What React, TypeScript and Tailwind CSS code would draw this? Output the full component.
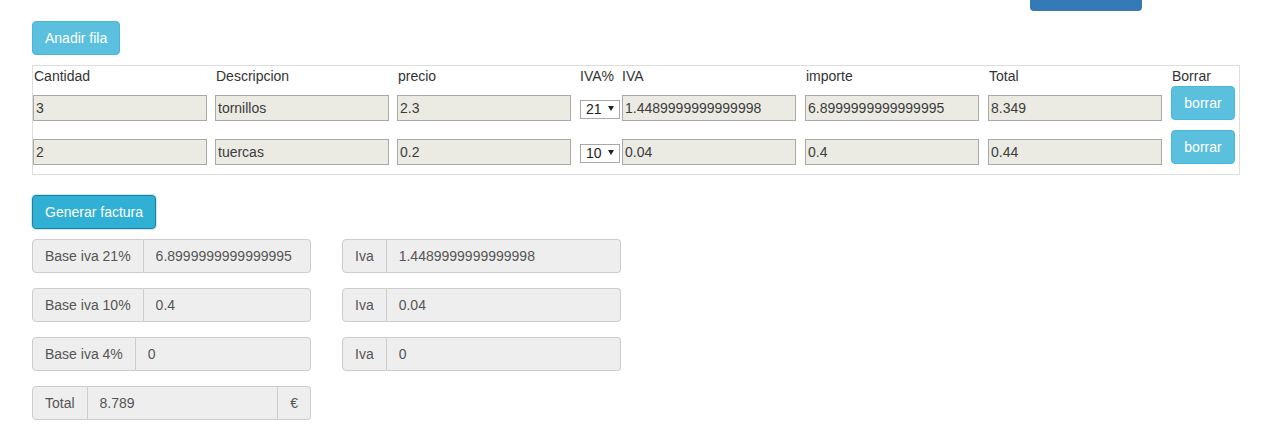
import React from "react";

type Line = { cantidad: string; desc: string; precio: string; iva: string; ivaVal: string; importe: string; total: string };

const lines: Line[] = [
  { cantidad: "3", desc: "tornillos", precio: "2.3", iva: "21", ivaVal: "1.4489999999999998", importe: "6.8999999999999995", total: "8.349" },
  { cantidad: "2", desc: "tuercas", precio: "0.2", iva: "10", ivaVal: "0.04", importe: "0.4", total: "0.44" },
];

const cols = "grid grid-cols-[182px_182px_183px_42px_183px_183px_183px_68px]";

function Cell({ value }: { value: string }) {
  return (
    <input
      readOnly
      value={value}
      className="mt-[9px] h-[26px] w-[174px] border border-[#a9a9a9] bg-[#ebebe4] px-[2px] text-[14px] text-[#3c3c3c] outline-none"
    />
  );
}

function Group({ label, value, width, suffix }: { label: string; value: string; width: string; suffix?: string }) {
  return (
    <div className={`flex h-[34px] ${width}`}>
      <span className="flex items-center rounded-l-[4px] border border-[#ccc] bg-[#eee] px-3 text-[#555] whitespace-nowrap">{label}</span>
      <input
        readOnly
        value={value}
        className={`min-w-0 flex-1 border border-l-0 border-[#ccc] bg-[#eee] px-3 text-[#555] outline-none ${suffix ? "" : "rounded-r-[4px]"}`}
      />
      {suffix && (
        <span className="flex items-center rounded-r-[4px] border border-l-0 border-[#ccc] bg-[#eee] px-3 text-[#555]">{suffix}</span>
      )}
    </div>
  );
}

export default function App() {
  return (
    <div className="min-h-[431px] bg-white px-[32px] font-['Liberation_Sans',Arial,sans-serif] text-[14px] text-[#333]">
      <div className="ml-[998px] h-[11px] w-[112px] rounded-b-[4px] bg-[#337ab7]" />

      <button className="mt-[10px] h-[34px] rounded-[4px] border border-[#46b8da] bg-[#5bc0de] px-3 text-white">
        Anadir fila
      </button>

      <div className="mt-[10px] w-[1208px] border border-[#ddd]">
        <div className={`${cols} h-[20px] items-center leading-5`}>
          <span className="pl-[1px]">Cantidad</span>
          <span className="pl-[1px]">Descripcion</span>
          <span className="pl-[1px]">precio</span>
          <span>IVA%</span>
          <span>IVA</span>
          <span className="pl-[1px]">importe</span>
          <span className="pl-[1px]">Total</span>
          <span className="pl-[1px]">Borrar</span>
        </div>
        {lines.map((l) => (
          <div key={l.desc} className={`${cols} h-[44px] items-start`}>
            <Cell value={l.cantidad} />
            <Cell value={l.desc} />
            <Cell value={l.precio} />
            <div className="relative mt-[13px] h-[19px] w-[40px]">
              <select
                defaultValue={l.iva}
                className="h-[19px] w-[40px] appearance-none border border-[#a9a9a9] bg-white pl-[5px] text-[14px] leading-[17px] text-[#222] outline-none"
              >
                <option value="21">21</option>
                <option value="10">10</option>
                <option value="4">4</option>
              </select>
              <svg className="pointer-events-none absolute right-[6px] top-[7px]" width="6" height="5" viewBox="0 0 6 5">
                <path d="M0 0h6L3 5z" fill="#222" />
              </svg>
            </div>
            <Cell value={l.ivaVal} />
            <Cell value={l.importe} />
            <Cell value={l.total} />
            <button className="h-[34px] w-[64px] rounded-[4px] border border-[#46b8da] bg-[#5bc0de] text-white">borrar</button>
          </div>
        ))}
      </div>

      <button className="mt-[20px] h-[34px] rounded-[4px] border border-[#1b809e] bg-[#31b0d5] px-3 text-white shadow-[0_0_0_1px_rgba(49,176,213,0.25)]">
        Generar factura
      </button>

      <div className="mt-[10px] flex flex-col gap-[15px]">
        <div className="flex gap-[31px]">
          <Group label="Base iva 21%" value="6.8999999999999995" width="w-[279px]" />
          <Group label="Iva" value="1.4489999999999998" width="w-[279px]" />
        </div>
        <div className="flex gap-[31px]">
          <Group label="Base iva 10%" value="0.4" width="w-[279px]" />
          <Group label="Iva" value="0.04" width="w-[279px]" />
        </div>
        <div className="flex gap-[31px]">
          <Group label="Base iva 4%" value="0" width="w-[279px]" />
          <Group label="Iva" value="0" width="w-[279px]" />
        </div>
        <Group label="Total" value="8.789" width="w-[279px]" suffix="€" />
      </div>
    </div>
  );
}
